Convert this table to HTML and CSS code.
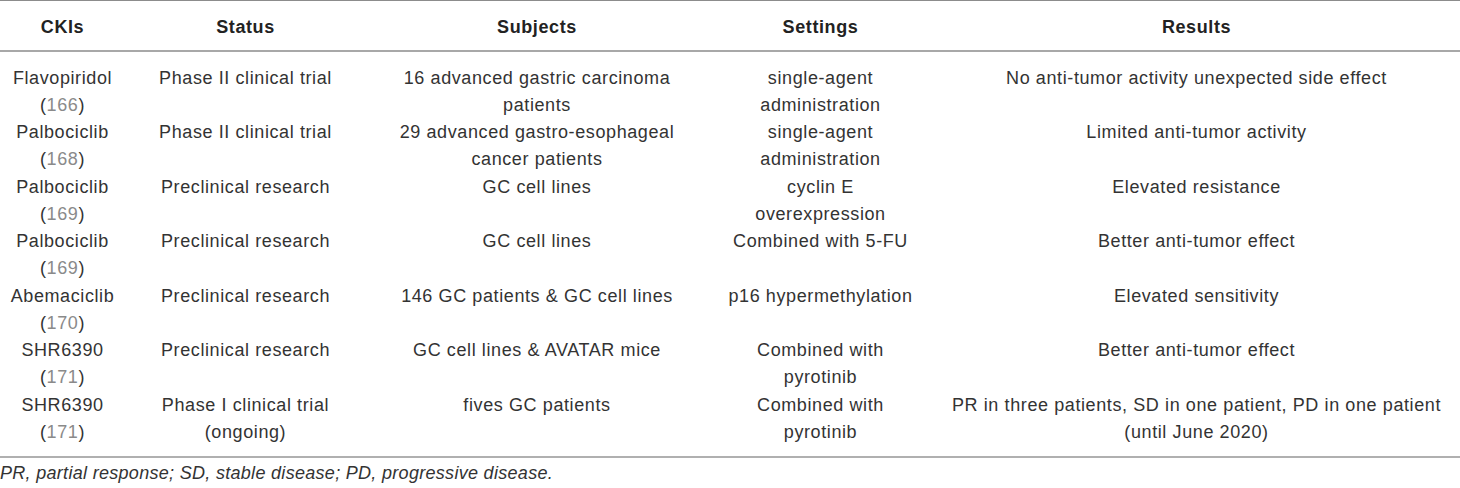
FILE: index.html
```html
<!DOCTYPE html>
<html lang="en">
<head>
<meta charset="utf-8">
<title>CKIs in gastric cancer</title>
<link rel="stylesheet" href="styles.css">
</head>
<body>
<div class="wrap">
<table class="data">
  <colgroup>
    <col class="c1"><col class="c2"><col class="c3"><col class="c4"><col class="c5">
  </colgroup>
  <thead>
    <tr><th>CKIs</th><th>Status</th><th>Subjects</th><th>Settings</th><th>Results</th></tr>
  </thead>
  <tbody>
    <tr>
      <td>Flavopiridol<br>(<span class="ref">166</span>)</td>
      <td>Phase II clinical trial</td>
      <td>16 advanced gastric carcinoma<br>patients</td>
      <td>single-agent<br>administration</td>
      <td>No anti-tumor activity unexpected side effect</td>
    </tr>
    <tr>
      <td>Palbociclib<br>(<span class="ref">168</span>)</td>
      <td>Phase II clinical trial</td>
      <td>29 advanced gastro-esophageal<br>cancer patients</td>
      <td>single-agent<br>administration</td>
      <td>Limited anti-tumor activity</td>
    </tr>
    <tr>
      <td>Palbociclib<br>(<span class="ref">169</span>)</td>
      <td>Preclinical research</td>
      <td>GC cell lines</td>
      <td>cyclin E<br>overexpression</td>
      <td>Elevated resistance</td>
    </tr>
    <tr>
      <td>Palbociclib<br>(<span class="ref">169</span>)</td>
      <td>Preclinical research</td>
      <td>GC cell lines</td>
      <td>Combined with 5-FU</td>
      <td>Better anti-tumor effect</td>
    </tr>
    <tr>
      <td>Abemaciclib<br>(<span class="ref">170</span>)</td>
      <td>Preclinical research</td>
      <td>146 GC patients &amp; GC cell lines</td>
      <td>p16 hypermethylation</td>
      <td>Elevated sensitivity</td>
    </tr>
    <tr>
      <td>SHR6390<br>(<span class="ref">171</span>)</td>
      <td>Preclinical research</td>
      <td>GC cell lines &amp; AVATAR mice</td>
      <td>Combined with<br>pyrotinib</td>
      <td>Better anti-tumor effect</td>
    </tr>
    <tr>
      <td>SHR6390<br>(<span class="ref">171</span>)</td>
      <td>Phase I clinical trial<br>(ongoing)</td>
      <td>fives GC patients</td>
      <td>Combined with<br>pyrotinib</td>
      <td>PR in three patients, SD in one patient, PD in one patient<br>(until June 2020)</td>
    </tr>
  </tbody>
</table>
<p class="note">PR, partial response; SD, stable disease; PD, progressive disease.</p>
</div>
</body>
</html>
```
FILE: styles.css
```css
html, body {
  margin: 0;
  padding: 0;
  background: #ffffff;
}
body {
  font-family: "Liberation Sans", Arial, sans-serif;
  font-size: 18px;
  color: #333333;
  letter-spacing: 0.6px;
}
.wrap {
  width: 1460px;
}
.data {
  width: 1460px;
  border-collapse: collapse;
  table-layout: fixed;
}
.c1 { width: 125px; }
.c2 { width: 241px; }
.c3 { width: 342px; }
.c4 { width: 225px; }
.c5 { width: 527px; }
.data thead tr {
  border-top: 1px solid #8c8c8c;
  border-bottom: 2px solid #a8a8a8;
}
.data th {
  font-weight: bold;
  color: #222222;
  line-height: 27px;
  padding: 13px 0 9px;
  text-align: center;
  vertical-align: top;
}
.data td {
  text-align: center;
  vertical-align: top;
  line-height: 27px;
  padding: 0;
  height: 54.5px;
  box-sizing: border-box;
}
.data tbody tr:first-child td {
  padding-top: 13px;
  height: 67.5px;
}
.data tbody tr:last-child td {
  padding-bottom: 10px;
  height: 64.5px;
}
.data tbody tr:last-child {
  border-bottom: 2px solid #b0b0b0;
}
.ref {
  color: #8a8a8a;
}
.note {
  margin: 0;
  padding-top: 3px;
  font-style: italic;
  line-height: 24px;
  letter-spacing: 0.3px;
  color: #333333;
}
```
